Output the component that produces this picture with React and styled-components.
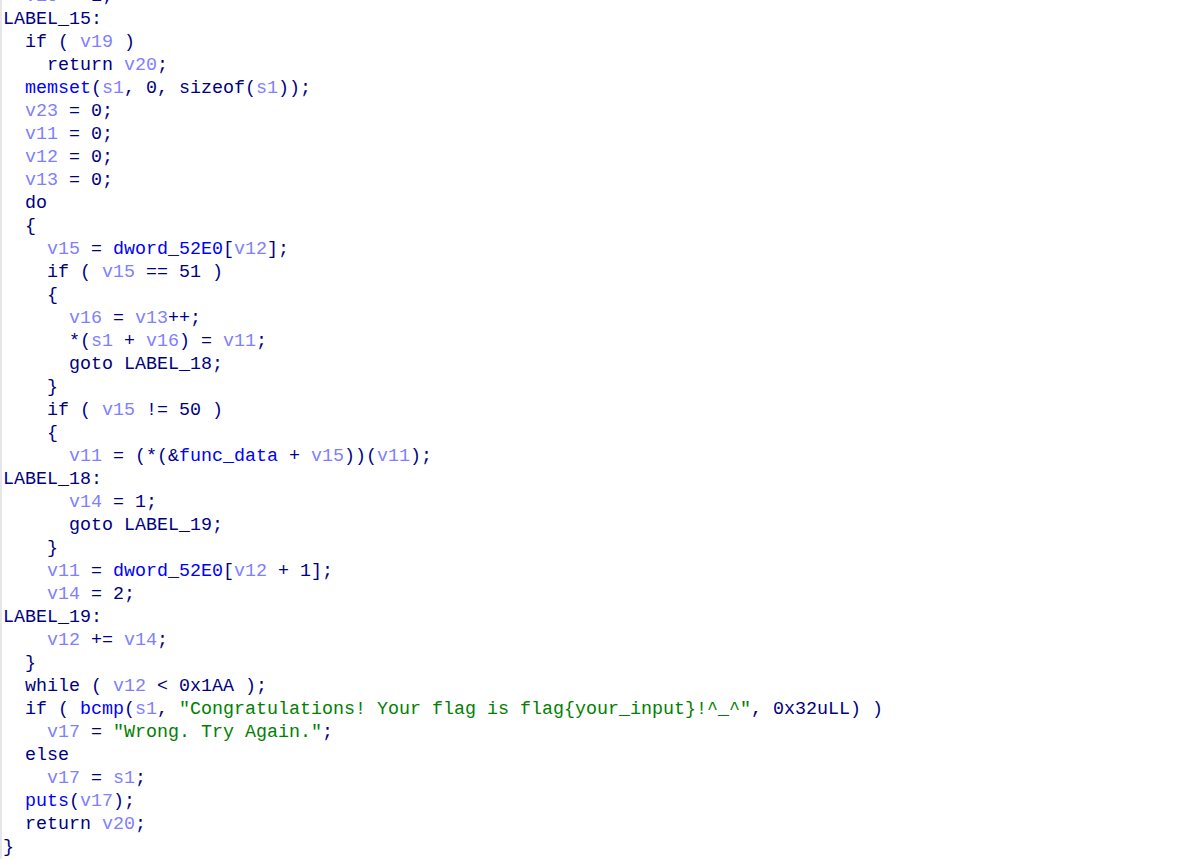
import React from 'react';
import styled, { createGlobalStyle } from 'styled-components';

const GlobalStyle = createGlobalStyle`
  html, body {
    margin: 0;
    padding: 0;
    background: #ffffff;
    overflow: hidden;
  }
`;

const Pane = styled.div`
  width: 1198px;
  height: 859px;
  overflow: hidden;
  background: #ffffff;
  border-left: 2px solid #e6e6e6;
  box-sizing: border-box;
`;

const Code = styled.div`
  margin-top: -15px;
  padding-left: 1px;
  font-family: "Liberation Mono", "DejaVu Sans Mono", monospace;
  font-size: 18.33px;
  color: #000080;
`;

const Line = styled.div`
  height: 23px;
  line-height: 23px;
  white-space: pre;
`;

const colors = {
  plain: '#000080',
  var: '#8080ff',
  func: '#0000ff',
  str: '#008000',
};

const Tok = styled.span`
  color: ${props => colors[props.$kind]};
`;

const FUNCS = new Set(['memset', 'dword_52E0', 'func_data', 'bcmp', 'puts']);

const source = [
  '  v10 = 1;',
  'LABEL_15:',
  '  if ( v19 )',
  '    return v20;',
  '  memset(s1, 0, sizeof(s1));',
  '  v23 = 0;',
  '  v11 = 0;',
  '  v12 = 0;',
  '  v13 = 0;',
  '  do',
  '  {',
  '    v15 = dword_52E0[v12];',
  '    if ( v15 == 51 )',
  '    {',
  '      v16 = v13++;',
  '      *(s1 + v16) = v11;',
  '      goto LABEL_18;',
  '    }',
  '    if ( v15 != 50 )',
  '    {',
  '      v11 = (*(&func_data + v15))(v11);',
  'LABEL_18:',
  '      v14 = 1;',
  '      goto LABEL_19;',
  '    }',
  '    v11 = dword_52E0[v12 + 1];',
  '    v14 = 2;',
  'LABEL_19:',
  '    v12 += v14;',
  '  }',
  '  while ( v12 < 0x1AA );',
  '  if ( bcmp(s1, "Congratulations! Your flag is flag{your_input}!^_^", 0x32uLL) )',
  '    v17 = "Wrong. Try Again.";',
  '  else',
  '    v17 = s1;',
  '  puts(v17);',
  '  return v20;',
  '}',
];

// split a line into coloured pieces the way the decompiler view does
const tokenize = line => {
  const out = [];
  const re = /("[^"]*")|([A-Za-z_][A-Za-z0-9_]*)|([^"A-Za-z_]+)/g;
  let m;
  while ((m = re.exec(line))) {
    if (m[1]) out.push(['str', m[1]]);
    else if (m[2]) {
      const w = m[2];
      if (/^v\d+$/.test(w) || w === 's1') out.push(['var', w]);
      else if (FUNCS.has(w)) out.push(['func', w]);
      else out.push(['plain', w]);
    } else out.push(['plain', m[3]]);
  }
  return out;
};

const App = () => (
  <>
    <GlobalStyle />
    <Pane>
      <Code>
        {source.map((line, i) => (
          <Line key={i}>
            {tokenize(line).map(([kind, text], j) => (
              <Tok key={j} $kind={kind}>{text}</Tok>
            ))}
          </Line>
        ))}
      </Code>
    </Pane>
  </>
);

export default App;
